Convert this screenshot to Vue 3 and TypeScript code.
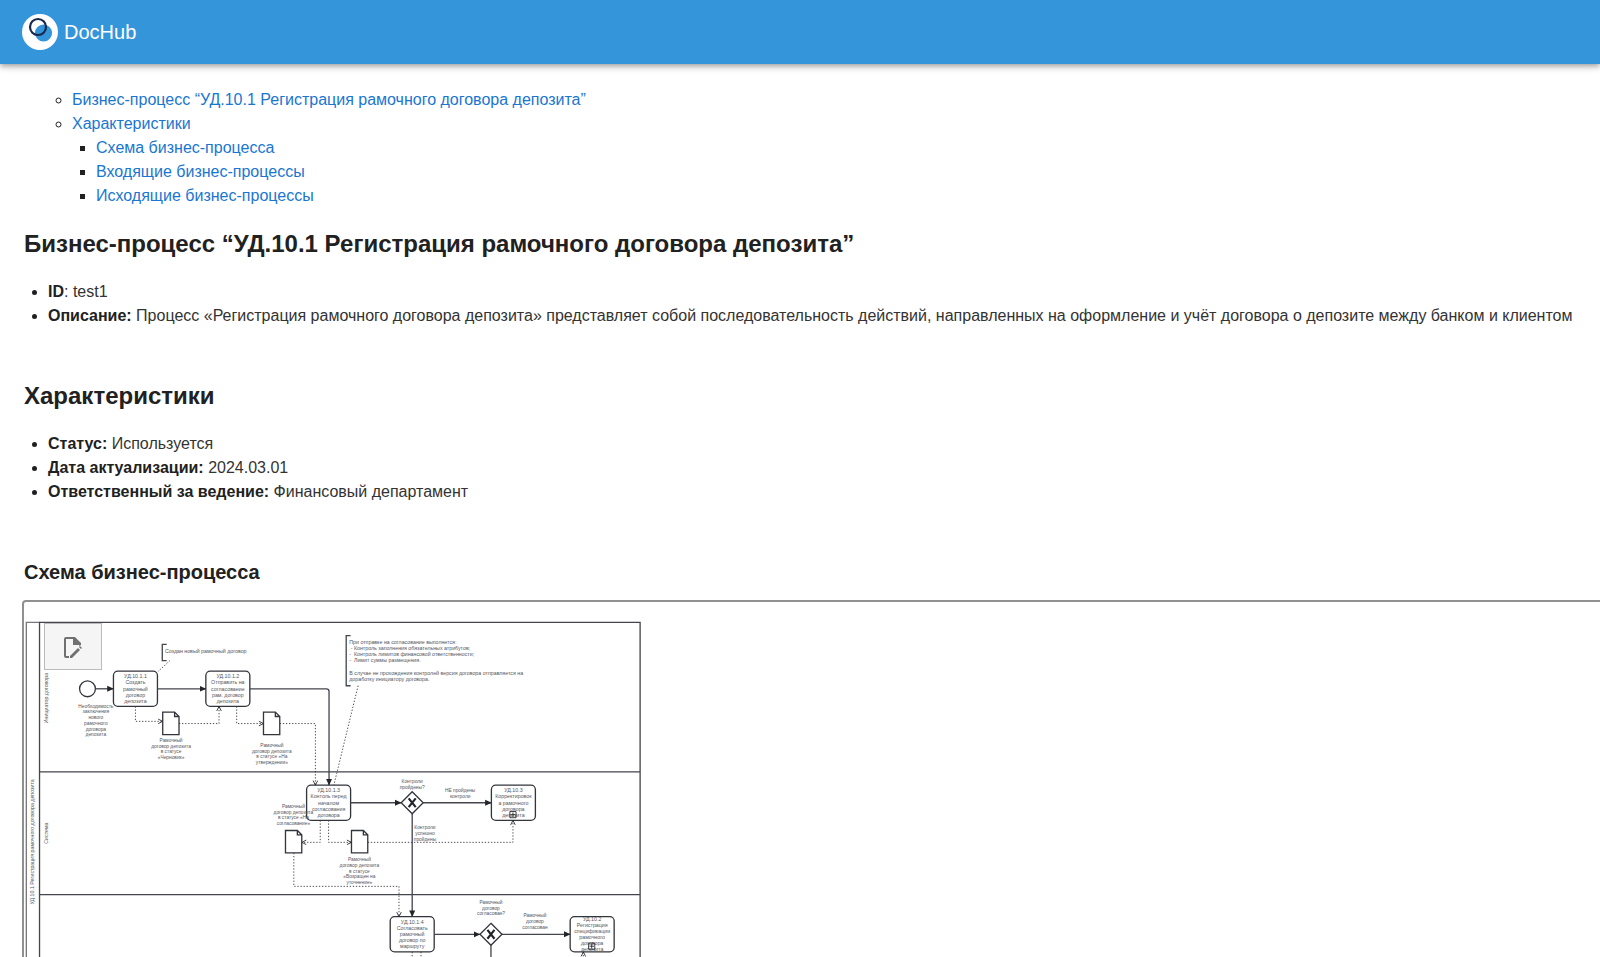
<script setup lang="ts">
interface TextBlock { x: number; y: number; lines: string[] }
interface Task extends TextBlock { sub?: boolean }
interface Point { x: number; y: number }

const tasks: Task[] = [
  { x: 201, y: 155, lines: ['УД.10.1.1', 'Создать', 'рамочный', 'договор', 'депозита'] },
  { x: 411, y: 155, lines: ['УД.10.1.2', 'Отправить на', 'согласование', 'рам. договор', 'депозита'] },
  { x: 640, y: 414, lines: ['УД.10.1.3', 'Контоль перед', 'началом', 'согласования', 'договора'] },
  { x: 1060, y: 414, sub: true, lines: ['УД.10.3', 'Корректировок', 'а рамочного', 'договора', 'депозита'] },
  { x: 830, y: 713, lines: ['УД.10.1.4', 'Согласовать', 'рамочный', 'договор по', 'маршруту'] },
  { x: 1239, y: 713, sub: true, lines: ['УД.10.2', 'Регистрация', 'спецификации', 'рамочного', 'договора', 'депозита'] },
]

const labels: TextBlock[] = [
  { x: 161, y: 234, lines: ['Необходимость', 'заключения', 'нового', 'рамочного', 'договора', 'депозита'] },
  { x: 332, y: 312, lines: ['Рамочный', 'договор депозита', 'в статусе', '«Черновик»'] },
  { x: 561, y: 323, lines: ['Рамочный', 'договор депозита', 'в статусе «На', 'утверждении»'] },
  { x: 610, y: 462, lines: ['Рамочный', 'договор депозита', 'в статусе «На', 'согласование»'] },
  { x: 760, y: 583, lines: ['Рамочный', 'договор депозита', 'в статусе', '«Возращен на', 'уточнение»'] },
  { x: 880, y: 406, lines: ['Контроли', 'пройдены?'] },
  { x: 989, y: 426, lines: ['НЕ пройдены', 'контроли'] },
  { x: 909, y: 510, lines: ['Контроли', 'успешно', 'пройдены'] },
  { x: 1059, y: 680, lines: ['Рамочный', 'договор', 'согласован?'] },
  { x: 1159, y: 710, lines: ['Рамочный', 'договор', 'согласован'] },
]

const notes: TextBlock[] = [
  { x: 318, y: 109, lines: ['Создан новый рамочный договор'] },
  {
    x: 737,
    y: 89,
    lines: [
      'При отправке на согласование выполнется:',
      '\u00a0- Контроль заполнения обязательных атрибутов;',
      '-\u00a0 Контроль лимитов финансовой ответственности;',
      '-\u00a0 Лимит суммы размещения.',
      '',
      'В случае не прохождения контролей версия договора отправляется на',
      'доработку инициатору договора.',
    ],
  },
]

const documents: Point[] = [
  { x: 313, y: 248 },
  { x: 542, y: 248 },
  { x: 592, y: 517 },
  { x: 742, y: 517 },
]

const gateways: Point[] = [
  { x: 880, y: 454 },
  { x: 1059, y: 753 },
]

const flows: string[] = [
  'M160 195H201',
  'M301 195H411',
  'M511 195H685Q691 195 691 201V414',
  'M740 454H855',
  'M905 454H1060',
  'M880 479V713',
  'M930 753H1034',
  'M1084 753H1239',
]

const dataFlows: string[] = [
  'M251 235V269H313',
  'M350 274H441V235',
  'M481 235V274H542',
  'M579 274H660V414',
  'M671 494V544H629',
  'M690 494V544H742',
  'M779 544H1109V494',
  'M611 568V644H850V713',
  'M1269 880V793',
]

const firstTaskLine = (task: Task): number => task.y + 40 - (task.lines.length - 1) * 7
</script>

<template>
  <div class="page">
    <header class="bar">
      <svg class="logo" viewBox="0 0 36 36" aria-hidden="true">
        <circle cx="18" cy="18" r="18" fill="#fff" />
        <circle cx="21.5" cy="19" r="8.6" fill="#3495db" />
        <circle cx="16" cy="13" r="8" fill="none" stroke="#16294d" stroke-width="2.2" />
      </svg>
      <span class="brand">DocHub</span>
    </header>

    <main class="content">
      <nav class="toc" aria-label="Содержание">
        <ul class="toc-list">
          <li><a href="#process">Бизнес-процесс “УД.10.1 Регистрация рамочного договора депозита”</a></li>
          <li>
            <a href="#features">Характеристики</a>
            <ul class="toc-sub">
              <li><a href="#scheme">Схема бизнес-процесса</a></li>
              <li><a href="#incoming">Входящие бизнес-процессы</a></li>
              <li><a href="#outgoing">Исходящие бизнес-процессы</a></li>
            </ul>
          </li>
        </ul>
      </nav>

      <h1 id="process" class="title">Бизнес-процесс “УД.10.1 Регистрация рамочного договора депозита”</h1>
      <ul class="facts">
        <li><strong>ID</strong>: test1</li>
        <li>
          <strong>Описание:</strong> Процесс «Регистрация рамочного договора депозита» представляет собой последовательность действий, направленных на оформление и учёт договора о депозите между банком и клиентом
        </li>
      </ul>

      <h1 id="features" class="title spaced">Характеристики</h1>
      <ul class="facts">
        <li><strong>Статус:</strong> Используется</li>
        <li><strong>Дата актуализации:</strong> 2024.03.01</li>
        <li><strong>Ответственный за ведение:</strong> Финансовый департамент</li>
      </ul>

      <h2 id="scheme" class="subtitle">Схема бизнес-процесса</h2>
      <section class="canvas" aria-labelledby="scheme">
        <svg class="diagram" viewBox="0 0 1400 880">
          <defs>
            <marker id="arrow" viewBox="0 0 20 20" refX="19" refY="10" markerWidth="15" markerHeight="17" markerUnits="userSpaceOnUse" orient="auto" preserveAspectRatio="none">
              <path d="M0 2L20 10L0 18Z" fill="#22242a" />
            </marker>
            <marker id="open-arrow" viewBox="0 0 20 20" refX="18" refY="10" markerWidth="13" markerHeight="14" markerUnits="userSpaceOnUse" orient="auto">
              <path d="M2 2L18 10L2 18" fill="none" stroke="#22242a" stroke-width="3" />
            </marker>
          </defs>

          <g class="lane">
            <path class="pool" d="M33 44H3V1000" />
            <path d="M33 1000V44H1398V1000M33 384H1398M33 663H1398" />
          </g>

          <text class="vertical" transform="translate(21 543) rotate(-90)">УД.10.1 Регистрация рамочного договора депозита</text>
          <text class="vertical" transform="translate(53 216) rotate(-90)">Инициатор договора</text>
          <text class="vertical" transform="translate(53 523) rotate(-90)">Система</text>

          <circle class="shape" cx="142" cy="195" r="18" />

          <g v-for="task in tasks" :key="task.lines[0]">
            <rect class="shape" :x="task.x" :y="task.y" width="100" height="80" rx="10" />
            <text class="task-text">
              <tspan v-for="(line, i) in task.lines" :key="i" :x="task.x + 50" :y="firstTaskLine(task) + i * 14 + 4">{{ line }}</tspan>
            </text>
            <path v-if="task.sub" class="marker" :d="`M${task.x + 42} ${task.y + 60}h14v14h-14zM${task.x + 49} ${task.y + 62}v10m-5-5h10`" />
          </g>

          <path v-for="flow in flows" :key="flow" class="flow" :d="flow" marker-end="url(#arrow)" />
          <path class="flow" d="M1059 778V880" />
          <path v-for="flow in dataFlows" :key="flow" class="dotted" :d="flow" marker-end="url(#open-arrow)" />
          <path class="dotted" d="M880 793V880M900 793V880M329 131L302 156M757 188L702 414" />

          <path
            v-for="doc in documents"
            :key="`${doc.x}-${doc.y}`"
            class="shape"
            :d="`M${doc.x} ${doc.y}h27l10 10v41h-37zM${doc.x + 27} ${doc.y}v10h10`"
          />

          <g v-for="gate in gateways" :key="gate.x">
            <path class="shape" :d="`M${gate.x} ${gate.y - 25}l25 25l-25 25l-25 -25z`" />
            <path class="cross" :d="`M${gate.x - 8} ${gate.y - 10}l16 20m0 -20l-16 20`" />
          </g>

          <path class="bracket" d="M322 94H312V131H322M740 74H730V188H740" />

          <text v-for="(note, n) in notes" :key="n" class="note">
            <tspan v-for="(line, i) in note.lines" :key="i" :x="note.x" :y="note.y + i * 14 + 4">{{ line }}</tspan>
          </text>
          <text v-for="(label, n) in labels" :key="n" class="label">
            <tspan v-for="(line, i) in label.lines" :key="i" :x="label.x" :y="label.y + i * 13 + 4">{{ line }}</tspan>
          </text>
        </svg>

        <button class="edit" type="button" aria-label="Редактировать схему">
          <svg viewBox="0 0 24 24" aria-hidden="true">
            <path d="M8 21H5V4h7v6h6v1l2-1V8l-6-6H5a2 2 0 0 0-2 2v17a2 2 0 0 0 2 2h3z" />
            <path d="M12 2v8h8z" />
            <path d="M17 13l2 2-8 8H9v-2zM19 11l2 2-1 1-2-2z" />
          </svg>
        </button>
      </section>
    </main>
  </div>
</template>

<style>
body {
  margin: 0;
  background: #fff;
}
</style>

<style scoped>
.page {
  height: 100vh;
  overflow: hidden;
  font-family: "Liberation Sans", Arial, sans-serif;
  font-size: 16px;
  line-height: 24px;
  color: #212121;
}
.bar {
  position: relative;
  display: flex;
  align-items: center;
  gap: 6px;
  height: 64px;
  padding: 0 22px;
  background: #3495db;
  box-shadow: 0 2px 4px -1px rgba(0, 0, 0, 0.2), 0 4px 5px 0 rgba(0, 0, 0, 0.14), 0 1px 10px 0 rgba(0, 0, 0, 0.12);
}
.logo {
  width: 36px;
  height: 36px;
}
.brand {
  font-size: 20px;
  color: #fff;
}
.content {
  padding: 24px 0 0 24px;
}
ul {
  margin: 0;
  padding-left: 24px;
}
.toc {
  padding-left: 24px;
}
.toc-list {
  list-style: circle;
}
.toc-sub {
  list-style: square;
}
a {
  color: #1976d2;
  text-decoration: none;
}
.title {
  margin: 20px 0;
  font-size: 24px;
  line-height: 32px;
  font-weight: 700;
}
.spaced {
  margin-top: 52px;
}
.facts {
  list-style: disc;
  color: #333;
}
.facts strong,
.facts li::marker {
  color: #212121;
}
.subtitle {
  margin: 52px 0 12px;
  font-size: 20px;
  line-height: 32px;
  font-weight: 700;
}
.canvas {
  position: relative;
  margin: 0 -8px 0 -2px;
  padding-top: 1px;
  border: 2px solid #909090;
  border-radius: 4px;
}
.diagram {
  display: block;
  width: 616px;
  margin-left: 1px;
}
.edit {
  position: absolute;
  top: 21px;
  left: 20px;
  display: grid;
  place-items: center;
  width: 58px;
  height: 47px;
  padding: 0;
  border: 1px solid #bbb;
  background: #f5f5f5;
}
.edit svg {
  width: 24px;
  height: 24px;
  fill: #707070;
}
.lane path {
  fill: none;
  stroke: #44464e;
  stroke-width: 3px;
}
.lane .pool {
  stroke: #77787c;
}
.shape {
  fill: #fff;
  stroke: #33353c;
  stroke-width: 3px;
}
.flow,
.bracket {
  fill: none;
  stroke: #44464e;
  stroke-width: 3px;
}
.dotted {
  fill: none;
  stroke: #33353c;
  stroke-width: 2px;
  stroke-dasharray: 3 4;
}
.marker {
  fill: none;
  stroke: #22242a;
  stroke-width: 2px;
}
.cross {
  stroke: #22242a;
  stroke-width: 5px;
}
text {
  fill: #55575e;
  font-size: 12px;
}
.vertical,
.task-text,
.label {
  text-anchor: middle;
}
.label {
  font-size: 11px;
}
</style>
